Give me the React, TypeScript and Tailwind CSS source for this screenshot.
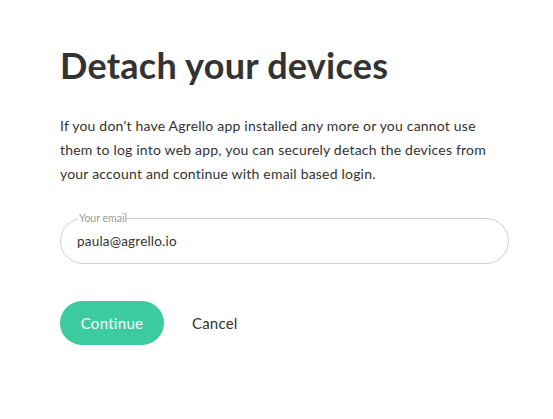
import React, { useState } from 'react';

const App: React.FC = () => {
  const [email, setEmail] = useState('paula@agrello.io');

  return (
    <div className="min-h-[419px] w-[553px] bg-white px-[60px] pt-[41px] text-[#333333]" style={{ fontFamily: 'Lato, "Open Sans", sans-serif' }}>
      <h1 className="text-[36px] font-bold leading-[48px] tracking-[0.25px]">Detach your devices</h1>
      <p className="mt-[25px] w-[436px] text-[14px] leading-[24px] tracking-[0.2px]">
        If you don't have Agrello app installed any more or you cannot use them to log into web app, you can securely detach the devices from your account and continue with email based login.
      </p>

      <fieldset className="mt-[27px] h-[51px] w-[449px] rounded-full border border-[#cfcfcf] px-[16px] pb-[4px]">
        <legend className="ml-[1px] pl-[1px] text-[10.5px] leading-[10px] text-[#9a9a9a]">Your email</legend>
        <input
          value={email}
          onChange={(e) => setEmail(e.target.value)}
          className="h-[36px] w-full bg-transparent text-[13.5px] tracking-[0.2px] text-[#333333] outline-none"
        />
      </fieldset>

      <div className="mt-[37px] flex items-center gap-[28px]">
        <button className="h-[44px] w-[104px] rounded-full bg-[#3ccb9e] text-[15px] tracking-[0.3px] text-white">Continue</button>
        <button className="text-[15px] tracking-[0.2px] text-[#333333]">Cancel</button>
      </div>
    </div>
  );
};

export default App;
